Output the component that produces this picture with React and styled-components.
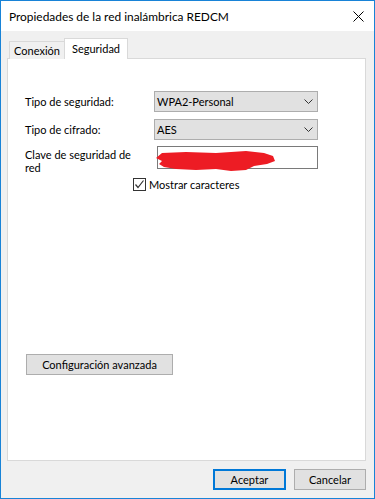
import React from 'react';
import styled, { createGlobalStyle } from 'styled-components';

const GlobalStyle = createGlobalStyle`
  html, body { margin: 0; padding: 0; background: #ffffff; }
  body {
    font-family: Lato, "Liberation Sans", sans-serif;
    font-size: 11px;
    color: #000;
  }
  * { box-sizing: border-box; }
`;

const Window = styled.div`
  width: 375px;
  height: 499px;
  border: 1px solid #1883d7;
  display: flex;
  flex-direction: column;
  background: #f0f0f0;
`;

const TitleBar = styled.div`
  flex: none;
  height: 30px;
  background: #ffffff;
  display: flex;
  align-items: center;
  justify-content: space-between;
  padding: 0 10px 0 8px;
`;

const Title = styled.span`
  font-size: 11.9px;
  line-height: 15px;
  padding-top: 1px;
`;

const CloseIcon = styled.svg`
  width: 11px;
  height: 11px;
  display: block;
  margin-top: 1px;
`;

const Body = styled.div`
  flex: 1;
  display: flex;
  flex-direction: column;
  padding: 7px 8px 8px 6px;
  min-height: 0;
`;

const TabRow = styled.div`
  flex: none;
  display: flex;
  align-items: flex-end;
  height: 21px;
  padding-left: 2px;
  margin-bottom: -1px;
`;

const Tab = styled.div`
  position: relative;
  z-index: ${p => (p.$active ? 1 : 0)};
  width: ${p => p.$w}px;
  height: ${p => (p.$active ? 21 : 18)}px;
  margin-left: ${p => (p.$active ? -1 : 0)}px;
  border: 1px solid #d9d9d9;
  border-bottom: none;
  background: ${p => (p.$active ? '#ffffff' : '#f0f0f0')};
  text-align: center;
  line-height: 15px;
  padding-top: ${p => (p.$active ? 2 : 1)}px;
`;

const Panel = styled.div`
  flex: 1;
  display: flex;
  flex-direction: column;
  background: #ffffff;
  border: 1px solid #d9d9d9;
  padding: 32px 0 0 17px;
`;

const Row = styled.div`
  display: grid;
  grid-template-columns: 129px 164px;
  align-items: ${p => (p.$top ? 'start' : 'center')};
  height: ${p => p.$h}px;
  margin-top: ${p => p.$gap || 0}px;
`;

const Label = styled.div`
  line-height: 13px;
  padding-top: ${p => (p.$top ? 2 : 0)}px;
`;

const Select = styled.div`
  height: 21px;
  background: #e1e1e1;
  border: 1px solid #adadad;
  display: flex;
  align-items: center;
  justify-content: space-between;
  padding: 0 4px 0 2px;
`;

const Chevron = styled.svg`
  width: 9px;
  height: 5px;
  display: block;
`;

const PasswordBox = styled.div`
  position: relative;
  margin-left: 3px;
  height: 23px;
  background: #ffffff;
  border: 1px solid #7a7a7a;
`;

const Scribble = styled.svg`
  position: absolute;
  left: -2px;
  top: 2px;
  width: 120px;
  height: 22px;
  overflow: visible;
`;

const CheckRow = styled.label`
  display: flex;
  align-items: center;
  margin-top: 9px;
  padding-left: 108px;
  height: 13px;
`;

const CheckBox = styled.span`
  width: 13px;
  height: 13px;
  border: 1px solid #333333;
  background: #ffffff;
  display: flex;
  align-items: center;
  justify-content: center;
  flex: none;
`;

const CheckText = styled.span`
  margin-left: 3px;
  line-height: 13px;
`;

const Button = styled.button`
  font: inherit;
  color: #000;
  width: ${p => p.$w}px;
  height: 21px;
  padding: 0;
  background: #e1e1e1;
  border: ${p => (p.$default ? '2px solid #0078d7' : '1px solid #adadad')};
  line-height: 15px;
  text-align: center;
  cursor: default;
`;

const AdvancedButton = styled(Button)`
  margin: 163px 0 0 1px;
  align-self: flex-start;
`;

const Footer = styled.div`
  flex: none;
  display: flex;
  justify-content: flex-end;
  gap: 8px;
  margin-top: 8px;
`;

export default function App() {
  return (
    <>
      <GlobalStyle />
      <Window>
        <TitleBar>
          <Title>Propiedades de la red inalámbrica REDCM</Title>
          <CloseIcon viewBox="0 0 11 11">
            <path d="M0.5 0.5 L10.5 10.5 M10.5 0.5 L0.5 10.5" stroke="#000" strokeWidth="1" fill="none" />
          </CloseIcon>
        </TitleBar>
        <Body>
          <TabRow>
            <Tab $w={56}>Conexión</Tab>
            <Tab $w={64} $active>Seguridad</Tab>
          </TabRow>
          <Panel>
            <Row $h={21}>
              <Label>Tipo de seguridad:</Label>
              <Select>
                <span>WPA2-Personal</span>
                <Chevron viewBox="0 0 9 5">
                  <path d="M0.5 0.5 L4.5 4.5 L8.5 0.5" stroke="#333" strokeWidth="1" fill="none" />
                </Chevron>
              </Select>
            </Row>
            <Row $h={21} $gap={7}>
              <Label>Tipo de cifrado:</Label>
              <Select>
                <span>AES</span>
                <Chevron viewBox="0 0 9 5">
                  <path d="M0.5 0.5 L4.5 4.5 L8.5 0.5" stroke="#333" strokeWidth="1" fill="none" />
                </Chevron>
              </Select>
            </Row>
            <Row $h={23} $gap={6} $top>
              <Label $top>Clave de seguridad de<br />red</Label>
              <PasswordBox>
                <Scribble viewBox="0 0 120 22">
                  <path
                    d="M0,9 L6,4 L30,3 L60,4 L90,2 L108,4 L117,7 L119,12 L111,15 L98,17 L90,21 L75,22 L60,20 L40,21 L20,20 L8,18 L3,15 L6,12 Z"
                    fill="#ed1c24"
                  />
                </Scribble>
              </PasswordBox>
            </Row>
            <CheckRow>
              <CheckBox>
                <svg width="11" height="11" viewBox="0 0 11 11">
                  <path d="M1.5 5.5 L4 8.5 L9.5 1.5" stroke="#333" strokeWidth="1.2" fill="none" />
                </svg>
              </CheckBox>
              <CheckText>Mostrar caracteres</CheckText>
            </CheckRow>
            <AdvancedButton $w={147}>Configuración avanzada</AdvancedButton>
          </Panel>
          <Footer>
            <Button $w={73} $default>Aceptar</Button>
            <Button $w={72}>Cancelar</Button>
          </Footer>
        </Body>
      </Window>
    </>
  );
}
